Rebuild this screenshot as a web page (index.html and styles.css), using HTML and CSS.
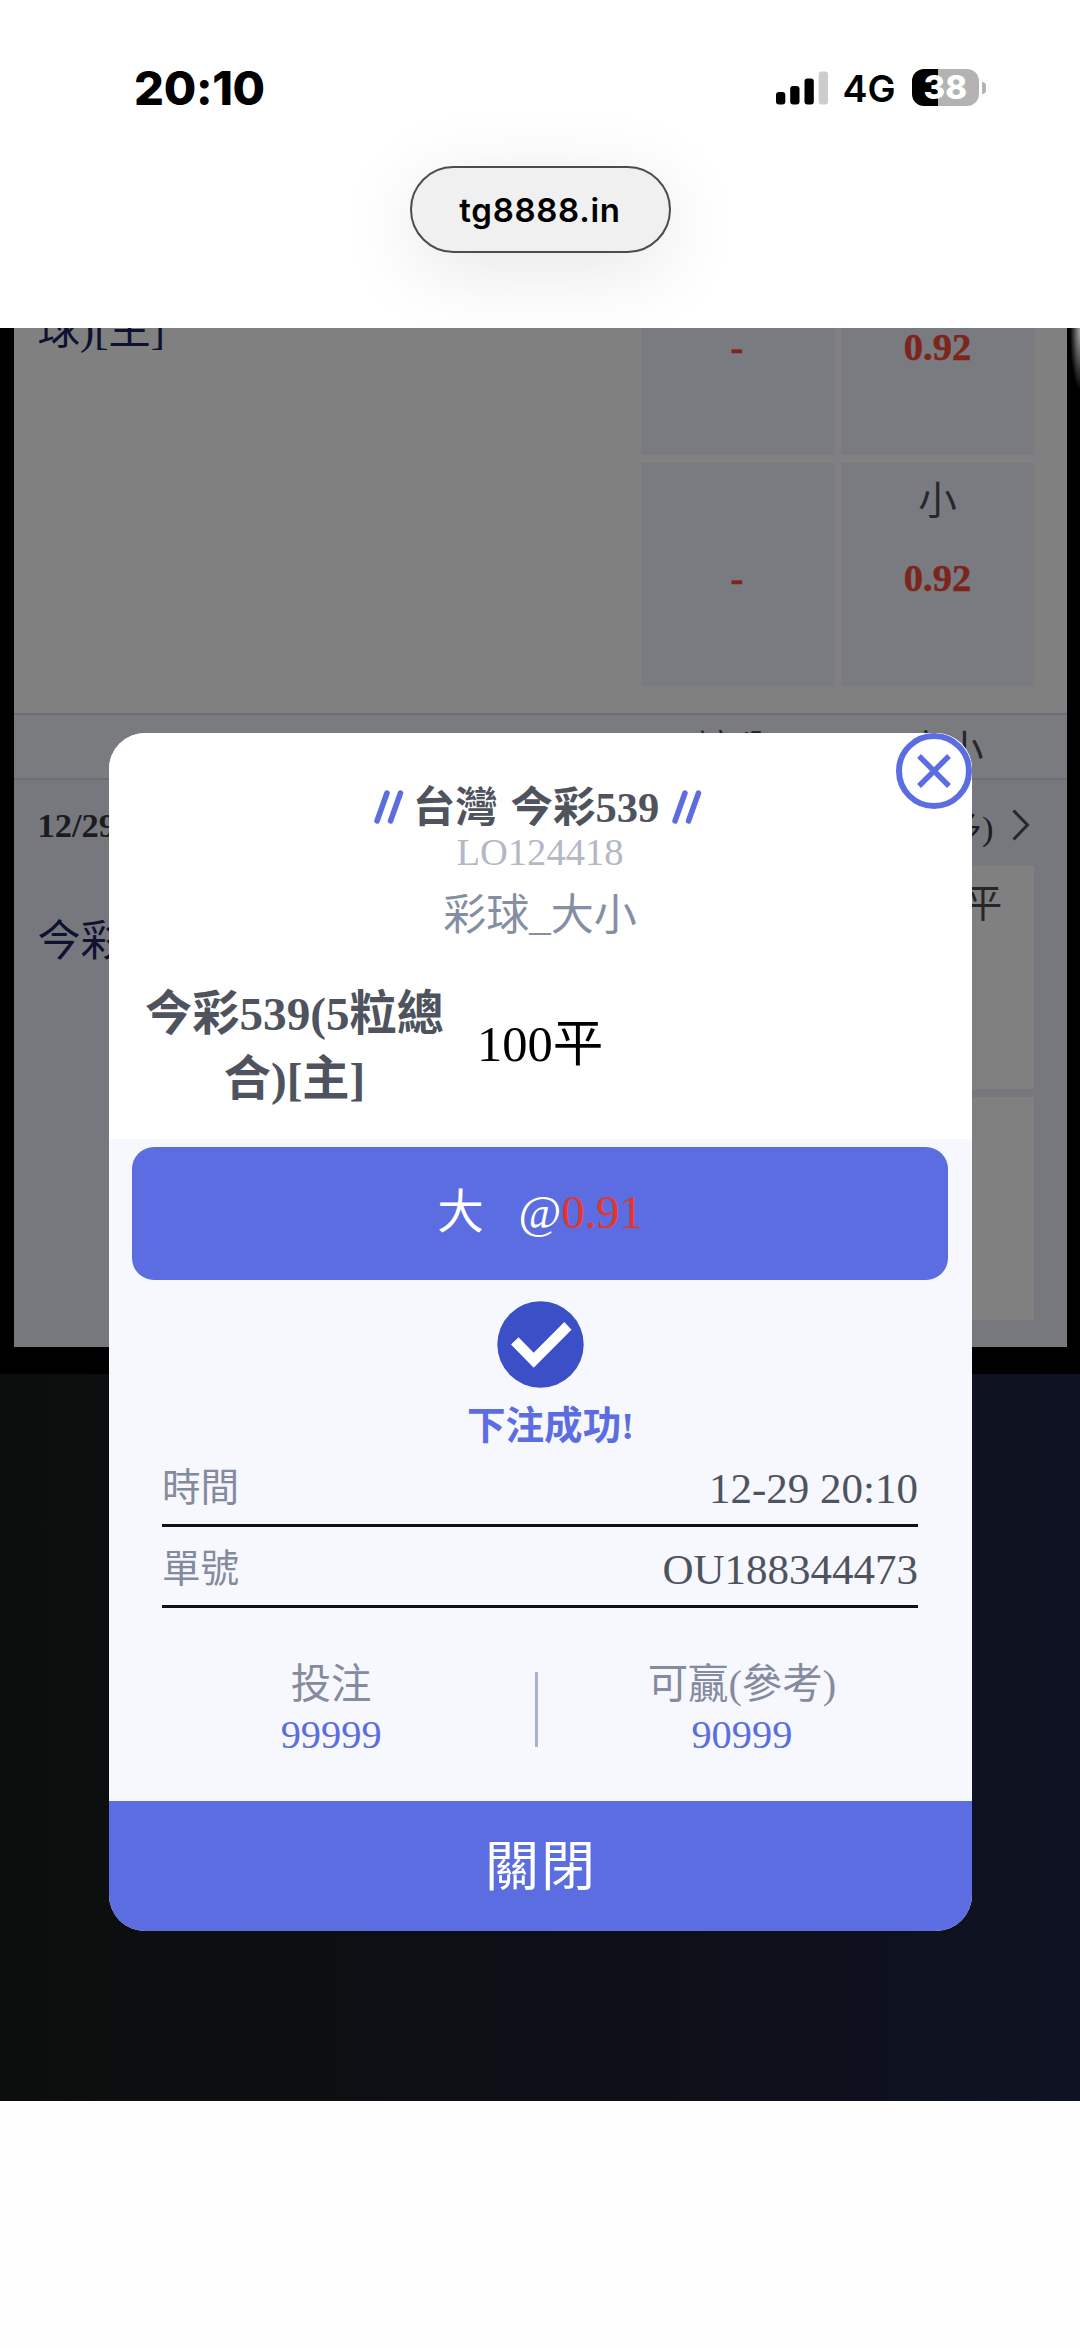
FILE: index.html
```html
<!DOCTYPE html>
<html lang="zh-Hant">
<head>
<meta charset="utf-8">
<title>今彩539</title>
<link rel="stylesheet" href="styles.css">
</head>
<body>
<header class="browser">
  <div class="status">
    <span class="clock">20:10</span>
    <div class="status-right">
      <svg class="signal" width="52" height="34" viewBox="0 0 52 34">
        <rect x="0" y="21" width="9.3" height="12.5" rx="3"/>
        <rect x="14.2" y="15" width="9.3" height="18.5" rx="3"/>
        <rect x="28.5" y="7.500" width="9.3" height="26" rx="3"/>
        <rect class="dim" x="42.700" y="0.500" width="9.300" height="33" rx="3"/>
      </svg>
      <span class="network">4G</span>
      <div class="battery"><span>38</span></div>
      <i class="battery-tip"></i>
    </div>
  </div>
  <div class="address">tg8888.in</div>
</header>

<main class="scene">
  <div class="board">
    <section class="market first">
      <div class="market-name">球)[主]</div>
      <div class="cells">
        <div class="cell"><span></span><b>-</b></div>
        <div class="cell"><span></span><b>0.92</b></div>
        <div class="cell"><span></span><b>-</b></div>
        <div class="cell"><span>小</span><b>0.92</b></div>
      </div>
    </section>
    <div class="columns"><span>讓分</span><span>大小</span></div>
    <section class="second">
      <div class="when">
        <b>12/29</b>
        <span class="more">(更多)
          <svg width="18" height="32" viewBox="0 0 18 32"><path d="M1.500 1.500 15.500 16 1.500 30.500" fill="none" stroke="#26272b" stroke-width="3"/></svg>
        </span>
      </div>
      <div class="market">
        <div class="market-name">今彩</div>
        <div class="cells">
          <div class="cell"></div>
          <div class="cell"><span>大100平</span></div>
          <div class="cell"></div>
          <div class="cell"></div>
        </div>
      </div>
    </section>
  </div>

  <div class="modal">
    <div class="modal-head">
      <h1 class="title">
        <svg width="30" height="34" viewBox="0 0 30 34"><path d="M3 31 13 3M16.500 31 26.500 3"/></svg>
        <span>台灣 今彩539</span>
        <svg width="30" height="34" viewBox="0 0 30 34"><path d="M3 31 13 3M16.500 31 26.500 3"/></svg>
      </h1>
      <div class="code">LO124418</div>
      <div class="play">彩球_大小</div>
      <div class="match">
        <div class="team">今彩539(5粒總<br>合)[主]</div>
        <div class="line">100平</div>
      </div>
    </div>
    <div class="modal-body">
      <div class="pick">大&nbsp;&nbsp; @<span>0.91</span></div>
      <svg class="check" width="87" height="87" viewBox="0 0 87 87">
        <circle cx="43.500" cy="43.500" r="43.200" fill="#3b4fc7"/>
        <path d="M14 43.500 21.500 36.200 36.700 51.700 67.300 21 74.500 28.700 36.700 66.700Z" fill="#fff"/>
      </svg>
      <div class="success">下注成功!</div>
      <dl class="details">
        <div><dt>時間</dt><dd>12-29 20:10</dd></div>
        <div><dt>單號</dt><dd>OU188344473</dd></div>
      </dl>
      <div class="stats">
        <div>投注<b>99999</b></div>
        <i></i>
        <div>可贏(參考)<b>90999</b></div>
      </div>
    </div>
    <div class="dismiss">關閉</div>
    <svg class="close" width="76" height="76" viewBox="0 0 76 76">
      <circle cx="38" cy="38" r="35" fill="#fff" stroke="#5b6de0" stroke-width="6"/>
      <path d="M23 23 53 53M53 23 23 53" stroke="#5b6de0" stroke-width="5.500"/>
    </svg>
  </div>
</main>
</body>
</html>
```
FILE: styles.css
```css
* { box-sizing: border-box; }

body {
  margin: 0;
  width: 1080px;
  height: 2348px;
  overflow: hidden;
  background: #fefefe;
  font-family: "Liberation Serif", "Noto Sans CJK TC", serif;
}

/* Browser chrome */
.browser {
  height: 327.5px;
  padding-top: 60px;
  font-family: Inter, sans-serif;
  display: flex;
  flex-direction: column;
  align-items: center;
  overflow: hidden;
  background: #fff;
}
.status {
  width: 100%;
  height: 56px;
  padding: 0 94.500px 0 134px;
  display: flex;
  justify-content: space-between;
  align-items: center;
}
.clock { padding-bottom: 2px; font-size: 47px; font-weight: 800; letter-spacing: -0.3px; }
.status-right { display: flex; align-items: center; }
.signal { margin-right: 14.5px; }
.signal .dim { fill: #ccc; }
.network { font-size: 37.5px; font-weight: 600; margin-right: 16px; padding-top: 1px; }
.battery {
  width: 67.5px;
  height: 36.5px;
  margin-top: -1px;
  border-radius: 12px;
  background: linear-gradient(90deg, #000 26px, #b3b3b3 26px);
  color: #fff;
  font-size: 33px;
  font-weight: 800;
  line-height: 37px;
  text-align: center;
}
.battery-tip {
  width: 4px;
  height: 12px;
  margin-left: 2.5px;
  border-radius: 0 6px 6px 0;
  background: #b3b3b3;
}
.address {
  width: 261px;
  height: 87px;
  margin-top: 50px;
  border: 2px solid #4c4c4e;
  border-radius: 44px;
  background: #f0f0f0;
  box-shadow: 0 16px 80px rgba(0, 0, 0, 0.1);
  font-size: 33px;
  font-weight: 600;
  letter-spacing: 0.7px;
  line-height: 84px;
  text-align: center;
}

/* Dimmed odds board */
.scene {
  position: relative;
  height: 1773px;
  overflow: hidden;
  background:
    radial-gradient(ellipse 10px 62px at 13px 0, #aaa, #000) 1067px 0 / 13px 64px no-repeat,
    linear-gradient(#000, #000) 0 0 / 100% 1046px no-repeat,
    linear-gradient(90deg, #0c0e0d, #0d1018 60%, #0f1222);
}
.board {
  width: 1053px;
  height: 1019.5px;
  margin: 0 auto;
  overflow: hidden;
  background: #77787e;
}
.market {
  display: flex;
  justify-content: space-between;
  padding: 0 32.5px 0 24px;
}
.market-name { font-size: 43px; line-height: 60px; color: #0e1230; }
.first { height: 385.5px; background: #808080; }
.first .market-name { margin-top: -28px; font-size: 42.5px; }
.first .cells { margin-top: -95.5px; }
.cells {
  display: grid;
  grid-template: 223px 223px / 193px 193px;
  gap: 8px 7.5px;
}
.cell {
  padding-top: 12px;
  background: #808080;
  display: flex;
  flex-direction: column;
  gap: 25px;
  align-items: center;
  font-size: 38.5px;
  line-height: 52px;
  color: #26272b;
}
.first .cell { background: #797b80; }
.cell span { height: 52px; }
.second .cell span { padding-right: 5px; }
.cell b { color: #7d241b; -webkit-text-stroke: 0.5px #7d241b; }
.columns {
  height: 66.500px;
  border: solid #6c6e77;
  border-width: 2px 0;
  background: #797b7f;
  padding: 4px 46px 0 682px;
  display: flex;
  justify-content: space-between;
  font-size: 38.5px;
  line-height: 63px;
  color: #26272b;
}
.columns span:last-child { padding-right: 37px; }
.second .when {
  height: 86.5px;
  padding: 5px 37px 0 24px;
  display: flex;
  justify-content: space-between;
  align-items: center;
  font-size: 34.5px;
  color: #1c1c1e;
}
.more { display: flex; align-items: center; gap: 18px; }
.second .market-name { padding-top: 46px; }

/* Bet receipt */
.modal {
  position: absolute;
  left: 108.5px;
  top: 405.5px;
  width: 863px;
  height: 1197.5px;
  border-radius: 36px;
  overflow: hidden;
  background: #f6f8fe;
  text-align: center;
}
.modal-head { height: 405.5px; padding-top: 50.5px; background: #fff; }
.title {
  margin: 0;
  display: flex;
  justify-content: center;
  align-items: center;
  gap: 11px;
  font-size: 42.500px;
  line-height: 48px;
  word-spacing: 2px;
  color: #4e535e;
  padding-right: 4px;
}
.title span { margin: 0 2px 0 -2px; }
.title svg { margin-top: -2px; stroke: #5b6de0; stroke-width: 5.5; stroke-linecap: round; }
.code { font-size: 38.6px; line-height: 40px; color: #b3b7c6; }
.play { margin-top: 14px; font-size: 43px; line-height: 60px; color: #858fa3; }
.match {
  margin-top: 36px;
  padding: 0 22.5px;
  display: flex;
  align-items: center;
}
.team {
  width: 327px;
  font-size: 47.2px;
  font-weight: 700;
  line-height: 65px;
  color: #4e535e;
}
.line { padding: 0 0 5px 19px; font-size: 50.5px; line-height: 60px; color: #000; }

.modal-body {
  height: 662.5px;
  padding: 8px 23.5px 0;
  display: flex;
  flex-direction: column;
  align-items: center;
}
.pick {
  width: 816px;
  height: 133.5px;
  border-radius: 22px;
  background: #5b6de0;
  color: #fff;
  font-size: 46.5px;
  line-height: 131px;
}
.pick span { color: #e93527; }
.check { margin-top: 21px; flex: none; }
.success {
  margin-top: 15px;
  padding-left: 21px;
  font-size: 38.6px;
  font-weight: 700;
  line-height: 46px;
  color: #5b6de0;
}
.details { width: 756px; margin: 0; }
.details div {
  height: 80.5px;
  padding-bottom: 10px;
  border-bottom: 3px solid #111;
  display: flex;
  justify-content: space-between;
  align-items: flex-end;
  line-height: 50px;
}
.details div:first-child { height: 78px; }
.details dt { padding-bottom: 1px; font-size: 38.6px; color: #858b9e; }
.details dd { margin: 0; font-size: 43px; color: #4e535e; }
.stats {
  align-self: stretch;
  margin: 52.5px 2px 0 -5px;
  display: flex;
  align-items: center;
  font-size: 40.4px;
  line-height: 49.5px;
  color: #858b9e;
}
.stats div { flex: 1; }
.stats b { display: block; font-weight: 400; color: #5b6de0; }
.stats i { width: 2.5px; height: 75px; background: #a9b1d0; }
.dismiss {
  height: 129.5px;
  padding-top: 5px;
  background: #5b6de0;
  color: #fff;
  font-size: 54px;
  line-height: 124px;
  letter-spacing: 2px;
  text-indent: 2px;
}
.close { position: absolute; top: -0.5px; right: 0; }
```
